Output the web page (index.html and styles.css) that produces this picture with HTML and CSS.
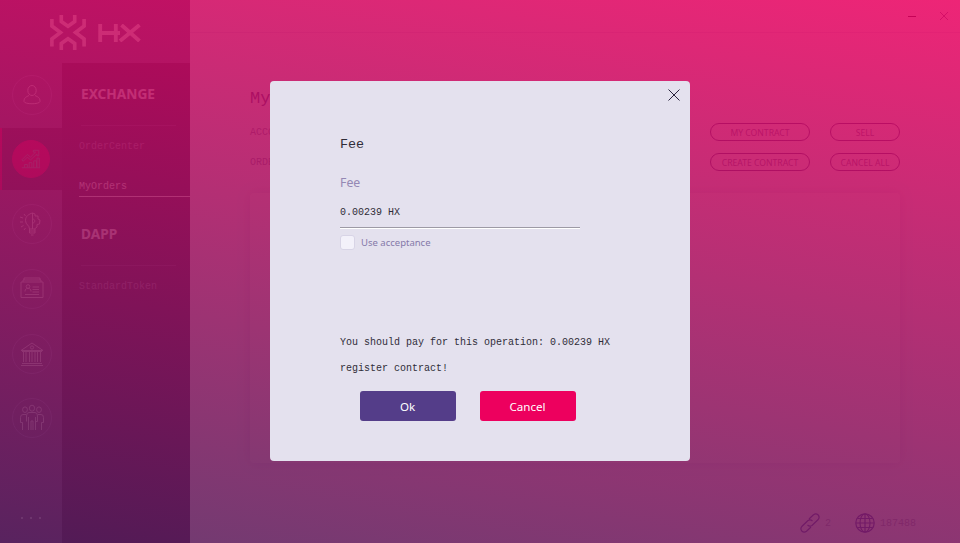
FILE: index.html
```html
<!DOCTYPE html>
<html lang="en">
<head>
<meta charset="utf-8">
<title>HX Wallet</title>
<link rel="stylesheet" href="styles.css">
</head>
<body>
<div class="app">
  <aside class="sidebar">
    <header class="brand">
      <svg class="brand-mark" viewBox="0 0 36 35">
        <path d="M11.3 0V6.5L18 11.3L24.7 6.5V0M11.3 35V28.5L18 23.8L24.7 28.5V35M1.9 4V11L10.5 17.5L1.9 24V31.5M34.1 4V11L25.5 17.5L34.1 24V31.5"/>
      </svg>
      <svg class="brand-name" viewBox="0 0 44 18">
        <path d="M2.2 0V18M17.8 0V18M2 9H22M23.5 1L41.5 17M41.5 1L22 17"/>
      </svg>
    </header>
    <div class="side-body">
      <nav class="rail">
        <a class="rail-item first"><span class="ring"><svg viewBox="0 0 24 24"><ellipse cx="12" cy="7.5" rx="4.2" ry="5"/><path d="M9 12.5C6 14 4 14.5 4 18.5C4.5 21.5 19.5 21.5 20 18.5C20 14.5 18 14 15 12.5"/></svg></span></a>
        <a class="rail-item active"><span class="ring"><svg viewBox="0 0 24 24"><path d="M2 21.5H22M5 21V18H8V21M10 21V16H13V21M15 21V14H18V21M18.5 21V11H21V21M2 13L8 7L11.5 10L17 4.5H14.5V2.5H20.5V8.5H18.5V6.5L11.5 13L8 10L3.5 14.5Z"/></svg></span></a>
        <a class="rail-item"><span class="ring"><svg viewBox="0 0 24 24"><path d="M9.5 17C9.5 13 5.5 13 5.5 8.5C5.5 4 9 2 12.5 1V17M12.5 1L15 2V4L18 4L18 7L20 8L19.5 12L17 12.5V15L14.5 17M9.5 17H15V21H9.5ZM9.5 19H15M11 23H13.5M12.5 7C15.5 7 15.5 11 12.5 11M4 2L5.5 4M0 5L3 6M0 10H3M1 15L3.5 13.5M4 18L5.5 16"/></svg></span></a>
        <a class="rail-item"><span class="ring"><svg viewBox="0 0 24 24"><path d="M1 5H23V20.5H1ZM3 5V3H21V5M4 3V1H20V3M5 14.5C5 12 6 11.5 8 11.5S11 12 11 14.5M12.5 10H19M12.5 12.5H19M12.5 15H19M5 17.5H19"/><circle cx="8" cy="9.5" r="1.8"/></svg></span></a>
        <a class="rail-item"><span class="ring"><svg viewBox="0 0 24 24"><path d="M1 8.5L12 1L23 8.5ZM2 9.5H22M3.5 10V20M6 10V20M9.5 10V20M12 10V20M15 10V20M17.5 10V20M20.5 10V20M2 21.5H22M1 23.5H23"/><circle cx="12" cy="5.5" r="1.6"/></svg></span></a>
        <a class="rail-item"><span class="ring"><svg viewBox="0 0 24 24"><ellipse cx="12" cy="2.2" rx="2.6" ry="3"/><ellipse cx="5" cy="3.7" rx="2.4" ry="2.8"/><ellipse cx="19" cy="3.7" rx="2.4" ry="2.8"/><path d="M6.5 15.5V10Q6.5 6.5 9 6.5H15Q17.5 6.5 17.5 10V15.5H15.5V24M8.5 11V24M15.5 11V16M11 24V15H13V24M6 8.5H3Q.5 8.5 .5 11.5V16.5H2.5V24M18 8.5H21Q23.5 8.5 23.5 11.5V16.5H21.5V24"/></svg></span></a>
        <span class="more"><i></i><i></i><i></i></span>
      </nav>
      <nav class="submenu">
        <h2>EXCHANGE</h2>
        <a class="sub">OrderCenter</a>
        <a class="sub current">MyOrders</a>
        <h2 class="second">DAPP</h2>
        <a class="sub">StandardToken</a>
      </nav>
    </div>
  </aside>
  <main class="main">
    <header class="titlebar">
      <svg class="win-min" viewBox="0 0 10 10"><path d="M1 5.5H9"/></svg>
      <svg class="win-close" viewBox="0 0 10 10"><path d="M1 1L9 9M9 1L1 9"/></svg>
    </header>
    <section class="content">
      <h1>MyOrders</h1>
      <div class="line"><span>ACCOUNT</span><button class="pill wide">MY CONTRACT</button><button class="pill">SELL</button></div>
      <div class="line"><span>ORDERS</span><button class="pill wide">CREATE CONTRACT</button><button class="pill">CANCEL ALL</button></div>
      <div class="card"></div>
    </section>
    <footer class="status">
      <svg viewBox="0 0 20 20"><path d="M9 6L13.5 1.8Q16 0 18.2 2Q20 4.2 18.2 6.5L12 12.5Q9.7 14 7.5 12M11 14L6.5 18.2Q4 20 1.8 18Q0 15.8 1.8 13.5L8 7.5Q10.3 6 12.5 8"/></svg>
      <span class="peers">2</span>
      <svg viewBox="0 0 20 20"><circle cx="10" cy="10" r="9.2"/><ellipse cx="10" cy="10" rx="5" ry="9.2"/><path d="M10 1V19M1 10H19M2.5 5.5H17.5M2.5 14.5H17.5"/></svg>
      <span>187488</span>
    </footer>
  </main>
</div>
<div class="mask">
  <div class="tint"></div>
  <div class="dialog" role="dialog">
    <svg class="close" viewBox="0 0 12 12"><path d="M.5 .5L11.5 11.5M11.5 .5L.5 11.5"/></svg>
    <h3>Fee</h3>
    <div class="label">Fee</div>
    <div class="amount">0.00239 HX</div>
    <div class="check"><span class="box"></span>Use acceptance</div>
    <p>You should pay for this operation: 0.00239 HX<br>register contract!</p>
    <div class="actions"><button class="ok">Ok</button><button class="cancel">Cancel</button></div>
  </div>
</div>
</body>
</html>
```
FILE: styles.css
```css
* { box-sizing: border-box; }
body { margin: 0; overflow: hidden; font-family: "Noto Sans", sans-serif; }
h1, h2, h3, p { margin: 0; font-weight: normal; }
button { border: 0; padding: 0; font-family: inherit; }
svg { fill: none; stroke: currentColor; flex: none; }

.app { display: flex; width: 960px; height: 543px; }
.sidebar { width: 190px; display: flex; flex-direction: column; background: #735788; color: #fff; }
.brand { height: 63px; padding: 15px 0 0 50px; display: flex; gap: 12px; color: #fff; }
.brand-mark { width: 36px; height: 35px; stroke-width: 3.6; }
.brand-name { width: 44px; height: 18px; margin-top: 9px; stroke-width: 3.8; }
.side-body { flex: 1; display: flex; }
.rail { width: 62px; display: flex; flex-direction: column; }
.rail-item { height: 64.7px; display: flex; align-items: center; justify-content: center; padding-left: 2px; }
.rail-item.first { height: 63px; margin-bottom: 2px; }
.rail-item.active { height: 62px; margin-bottom: 2px; padding: 0; background: #46284f; border-left: 2px solid #eb005f; }
.rail-item.active .ring { background: #f5005f; border-color: #f5005f; color: #b098a8; width: 38px; height: 38px; margin-right: 2px; }
.ring { width: 40px; height: 40px; border: 1px solid #9880b4; border-radius: 50%; display: grid; place-items: center; color: #ece6f4; }
.ring svg { width: 24px; height: 24px; overflow: visible; }
.rail-item.active svg { width: 22px; height: 22px; }
.more { margin: auto 0 24px 21px; display: flex; gap: 7px; }
.more i { width: 2px; height: 2px; background: #dcd5ea; }

.submenu { width: 128px; background: #40214a; padding-left: 17px; }
.submenu h2 { font-size: 13.7px; line-height: 20px; font-weight: bold; margin: 21px 14px 0 2px; padding: 0 0 21px 0; border-bottom: 1px solid #5c4270; color: #fff; }
.submenu h2.second { margin-top: 27px; }
.sub { display: block; font: 10px/24px "Liberation Mono", monospace; height: 24px; color: #9485a8; margin-top: 9px; }
.sub.current { margin-top: 16px; color: #fff; border-bottom: 1px solid #fff; height: 22px; }

.main { flex: 1; display: flex; flex-direction: column; background: #faf9fd; color: #543d89; }
.titlebar { height: 33px; border-bottom: 1px solid #e1dded; display: flex; justify-content: flex-end; gap: 22px; padding: 11px 11px 0 0; }
.titlebar svg { width: 10px; height: 10px; }
.titlebar .win-min { color: #140a28; }
.titlebar .win-close { color: #74639c; }
.content { padding: 54px 60px 0; }
h1 { font: 17px/24px "Liberation Mono", monospace; margin-bottom: 12px; }
.line { display: flex; align-items: flex-start; height: 30px; gap: 20px; }
.line span { flex: 1; font: 10px/20px "Liberation Mono", monospace; color: #8e80ad; }
.pill { width: 70px; height: 18px; border: 1px solid #543d89; border-radius: 9px; font-size: 8.6px; line-height: 18px; background: transparent; color: #7463a0; }
.pill.wide { width: 100px; }
.card { height: 270px; margin-top: 10px; border-radius: 4px; background: #fff; box-shadow: 0 0 14px rgba(84, 61, 137, .2); }
.status { margin-top: auto; height: 30px; padding-left: 610px; display: flex; gap: 5px; font: 10px/21px "Liberation Mono", monospace; color: #a89bc0; }
.status svg { width: 20px; height: 20px; color: #543db0; stroke-width: 1.2; }
.peers { width: 25px; }

.mask { position: fixed; inset: 0; display: grid; place-items: center; }
.tint { position: absolute; inset: 0; opacity: .85; background: linear-gradient(190deg, #eb005f, #541a58); }
.dialog { position: relative; width: 420px; height: 380px; margin-top: -1px; padding: 54px 70px 0; border-radius: 4px; background: #e4e1ee; color: #302d38; }
.close { position: absolute; top: 8px; right: 10px; width: 12px; height: 12px; color: #29233d; }
h3 { font: 13.4px/20px "Liberation Mono", monospace; }
.label { margin-top: 18px; font-size: 12.3px; line-height: 20px; color: #9488b4; }
.amount { width: 240px; height: 23px; margin-top: 12px; font: 10px/16px "Liberation Mono", monospace; border-bottom: 1px solid #9d9aa5; box-shadow: 0 1px #fff; }
.check { margin-top: 7px; display: flex; align-items: center; gap: 6px; font-size: 9.5px; line-height: 17px; height: 15px; color: #8579a9; }
.box { width: 15px; height: 15px; border: 1px solid #d8d4e6; border-radius: 3px; background: #f3f1fa; }
.dialog p { margin-top: 80px; font: 10px/26px "Liberation Mono", monospace; white-space: nowrap; }
.actions { margin: 9px 0 0 20px; display: flex; gap: 24px; }
.actions button { width: 96px; height: 30px; padding-right: 1px; border-radius: 3px; color: #fff; font-size: 11.6px; }
.ok { background: #543d89; }
.cancel { background: #ed005e; }
```
